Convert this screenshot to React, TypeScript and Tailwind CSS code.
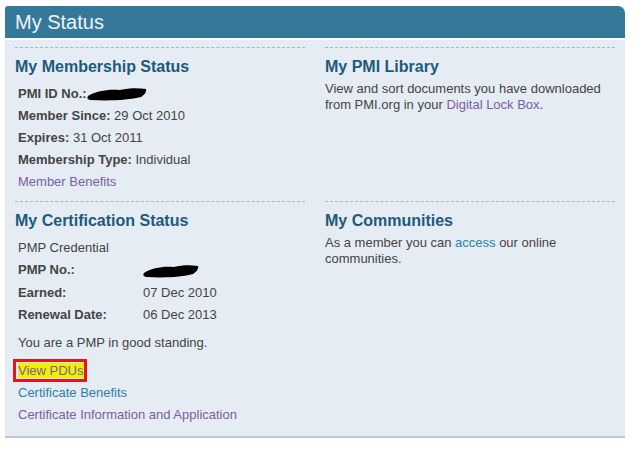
const Blob = ({ w }: { w: number }) => (
  <svg width={w} height="15" viewBox={`0 0 ${w} 15`} className="inline-block align-middle">
    <path
      d={`M1 9 C ${w * 0.15} 4, ${w * 0.35} 2, ${w * 0.55} 3 C ${w * 0.7} 1, ${w * 0.85} 1, ${w - 1} 2 C ${w} 5, ${w - 3} 8, ${w - 6} 10 C ${w * 0.7} 13, ${w * 0.4} 14, 3 13 C 0 12, 0 11, 1 9 Z`}
      fill="#000"
    />
  </svg>
)

const Dash = () => <div className="border-t border-dashed border-[#aab6c2] mb-[9px]" />

const Heading = ({ children }: { children: React.ReactNode }) => (
  <div className="text-[16px] font-bold text-[#1d5a7b] leading-[20px] mb-[6px]">{children}</div>
)

export default function App() {
  return (
    <div className="w-[633px] h-[449px] bg-white pt-[6px] pl-[5px] font-['Liberation_Sans',Arial,sans-serif] text-[13px] text-[#444]">
      <div className="w-[620px]">
        <div className="h-[32px] bg-[#35799a] rounded-tl-[3px] rounded-tr-[7px] pl-[10px] flex items-center text-[20px] text-[#eef4f7]">
          My Status
        </div>
        <div className="mt-[2px] bg-[#e6ecf3] border-b-2 border-[#c4c8cc] h-[398px] px-[10px] pt-[7px] grid grid-cols-2 gap-x-[20px]">
          <div>
            <Dash />
            <Heading>My Membership Status</Heading>
            <div className="pl-[3px] leading-[22px]">
              <div><b>PMI ID No.:</b><Blob w={60} /></div>
              <div><b>Member Since:</b> 29 Oct 2010</div>
              <div><b>Expires:</b> 31 Oct 2011</div>
              <div><b>Membership Type:</b> Individual</div>
              <div className="text-[#7b5ea0]">Member Benefits</div>
            </div>
            <div className="mt-[8px]"><Dash /></div>
            <Heading>My Certification Status</Heading>
            <div className="pl-[3px] leading-[22px]">
              <div>PMP Credential</div>
              <div className="flex"><b className="w-[125px]">PMP No.:</b><span className="pt-[1px]"><Blob w={56} /></span></div>
              <div className="flex"><b className="w-[125px]">Earned:</b>07 Dec 2010</div>
              <div className="flex"><b className="w-[125px]">Renewal Date:</b>06 Dec 2013</div>
              <div className="mt-[6px]">You are a PMP in good standing.</div>
              <div className="mt-[5px] -ml-[5px] w-[74px] h-[23px] border-[3px] border-[#e8141c] flex items-center pl-[2px] whitespace-nowrap">
                <span className="bg-[#f0f000] text-[#7b5ea0] leading-[15px]">View PDUs</span>
              </div>
              <div className="text-[#2b80a9]">Certificate Benefits</div>
              <div className="text-[#7b5ea0]">Certificate Information and Application</div>
            </div>
          </div>
          <div>
            <Dash />
            <Heading>My PMI Library</Heading>
            <div className="leading-[16px] -mt-[2px]">
              View and sort documents you have downloaded from PMI.org in your{' '}
              <span className="text-[#7b5ea0]">Digital Lock Box</span>.
            </div>
            <div className="mt-[88px]"><Dash /></div>
            <Heading>My Communities</Heading>
            <div className="leading-[16px] -mt-[2px] pr-[40px]">
              As a member you can <span className="text-[#2b80a9]">access</span> our online communities.
            </div>
          </div>
        </div>
      </div>
    </div>
  )
}
